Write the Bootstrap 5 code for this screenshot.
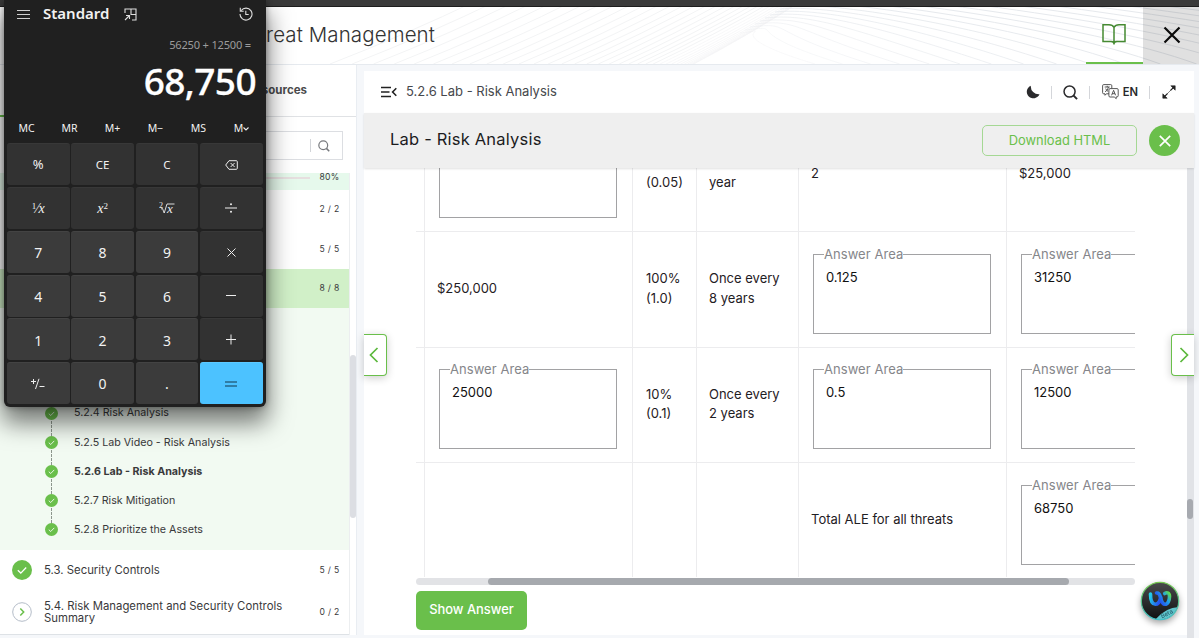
<!DOCTYPE html>
<html lang="en">
<head>
<meta charset="utf-8">
<meta name="viewport" content="width=device-width, initial-scale=1">
<title>5.2.6 Lab - Risk Analysis</title>
<link rel="stylesheet" href="https://cdn.jsdelivr.net/npm/bootstrap@5.3.0/dist/css/bootstrap.min.css">
<style>
:root { --leaf: #6abf4b; --ink: #39393b; }
body { font-family: Inter, "Liberation Sans", sans-serif; font-size: 13px; line-height: 19.5px; color: #1f2024; background: #f5f7fa; height: 638px; overflow: hidden; }
svg { display: block; flex: none; }
.chrome-strip { height: 7px; background: #3a3a3a; border-bottom: 1px solid #1d1d1d; }
.masthead { height: 58px; border-bottom: 1px solid #e6eaef; }
.masthead .waves { left: 0; top: 0; }
.masthead h1 { font-size: 20.5px; font-weight: 300; line-height: 56px; width: 435px; color: #333; letter-spacing: .1px; }
.book-tab { width: 57px; border-bottom: 2px solid var(--leaf); }
.exit-tab { width: 56px; background: rgba(0,0,0,.12); }
.side { width: 357px; border-right: 1px solid #e9edf2; }
.side-tabs { height: 52px; border-bottom: 1px solid #e0e2e5; font-size: 11.5px; font-weight: 700; color: #4a4a4c; padding-right: 49px; }
.tab-mark { left: 0; bottom: -1px; width: 120px; height: 2px; background: var(--leaf); }
.search-box { height: 29px; border: 1px solid #dcdee2; margin: 14px 13px 13px 16px; padding-right: 12px; }
.search-box .bar-line { height: 13px; border-left: 1px solid #d2d4d8; margin-right: 7px; }
.toc { width: 350px; border-right: 1px solid #eceef0; color: var(--ink); }
.tally { font-size: 8.6px; width: 39px; text-align: center; letter-spacing: .3px; flex: none; }
.row-head { height: 17px; background: #e6f9ec; }
.row-head .track { height: 2px; width: 200px; background: #e6dfdf; }
.sub-list { height: 242px; background: #f2faf2; padding-top: 90.5px; font-size: 10.68px; }
.sub-item { height: 29.2px; padding-left: 45px; gap: 16px; position: relative; }
.sub-item:not(:last-child)::after { content: ""; position: absolute; left: 51px; top: 22px; height: 15px; border-left: 1px dashed #8d968d; }
.topic { padding-left: 12px; font-size: 11.35px; line-height: 12.5px; }
.topic svg { margin-right: 12px; }
.side-scroll { width: 6px; }
.side-thumb { width: 6px; height: 163px; margin-top: 182px; background: #dcdee3; }
.stage { width: 830px; margin: 6px 5px 0 7px; }
.lesson-bar { height: 42px; padding: 0 17px; font-size: 13px; color: #46484c; }
.lesson-bar .sep { width: 1px; height: 13px; background: #d4d6da; }
.lab-bar { height: 55px; background: #efefef; padding: 0 14px 0 26px; box-shadow: 0 1px 2px rgba(0,0,0,.12); z-index: 2; }
.lab-bar h2 { font-size: 16.5px; letter-spacing: .2px; line-height: 52px; color: #1c1c1e; font-weight: 400; }
.btn-leaf-line { width: 155px; height: 31px; padding: 0; border: 1px solid #a5d894; border-radius: 5px; color: var(--leaf); font-size: 12.9px; line-height: 26px; }
.dot-close { width: 31px; height: 31px; background: var(--leaf); margin-left: 12px; }
.scroller { width: 719px; height: 409px; margin-left: 52px; }
.risk { table-layout: fixed; width: 927px; margin-top: -51px; border-collapse: separate; border-spacing: 0; }
.risk td { height: 115.33px; border-right: 1px solid #ececee; border-bottom: 1px solid #ececee; padding: 0 12px 1.5px; vertical-align: middle; }
.risk td.wide-tight { padding-left: 13px; }
.risk tr:last-child td { border-bottom: 0; padding-bottom: 2px; }
.answer { border: 1px solid #a2a2a4; height: 89px; width: 178px; margin: 1px 0 0 2px; padding: 0 12px; }
.answer legend { float: none; width: auto; margin: 0 0 0 -2px; padding: 0; font-size: 13px; line-height: 19px; color: #85868a; letter-spacing: .05px; }
.answer .reply { color: #111; margin-top: 4px; }
.h-track { width: 719px; height: 7px; margin: 1px 0 6px 52px; background: #e2e3e6; border-radius: 4px; }
.h-thumb { width: 581px; height: 7px; margin-left: 72px; background: #a6a9ae; border-radius: 4px; }
.btn-leaf { margin-left: 52px; width: 111px; height: 39px; background: var(--leaf); color: #fff; font-size: 12.9px; font-weight: 500; border: 0; border-radius: 5px; padding: 0 0 1px; }
.v-track { right: 0; top: 97px; width: 7px; height: 480px; background: #e1e3e7; }
.v-thumb { width: 6px; height: 20px; margin-top: 331px; background: #a7aab0; border-radius: 3px; }
.pager { width: 23px; height: 42px; top: 263px; border: 1px solid var(--leaf); background: #fff; box-shadow: 0 2px 8px rgba(0,0,0,.2); z-index: 3; }
.pager-prev { left: 0; border-left: 0; border-radius: 0 4px 4px 0; }
.pager-next { right: 0; border-right: 0; border-radius: 4px 0 0 4px; }
.helper { left: 776px; top: 510px; filter: drop-shadow(0 3px 3px rgba(0,0,0,.35)); z-index: 3; }
.calc { left: 4px; top: 0; width: 262px; height: 407px; background: #202020; border-radius: 0 0 6px 6px; color: #f2f2f2; font-family: "Noto Sans", "Open Sans", sans-serif; box-shadow: 0 14px 24px 2px rgba(0,0,0,.52), 0 0 6px rgba(0,0,0,.35); z-index: 10; }
.calc-title { height: 28px; padding: 0 13px 0 13px; }
.calc-title strong { font-size: 15px; font-weight: 600; margin: 0 15px 0 13px; }
.calc-expr { height: 32px; line-height: 34px; font-size: 11.1px; color: #9c9c9c; padding-right: 15px; letter-spacing: -.2px; }
.calc-value { height: 56px; line-height: 41px; font-size: 37px; font-weight: 500; padding-right: 10px; color: #fff; letter-spacing: -.6px; -webkit-text-stroke: .3px #fff; }
.calc-mem { height: 27px; line-height: 25px; font-size: 10.5px; padding: 0 1px; display: grid; grid-template-columns: repeat(6, 43px); text-align: center; }
.calc-keys { display: grid; grid-template-columns: repeat(4, 62.5px); grid-template-rows: repeat(6, 42px); gap: 1.85px; margin-left: 3px; }
.key { background: #323232; border-radius: 3px; font-size: 11.5px; display: flex; align-items: center; justify-content: center; border-top: 1px solid #383838; }
.key.num { background: #3b3b3b; border-top-color: #434343; font-size: 14px; padding-top: 1px; }
.key.math { font-family: "Liberation Serif", serif; font-style: italic; font-size: 14px; }
.key.math sup { font-size: 9px; font-style: normal; top: -.4em; }
.key.equals { background: #4cc2ff; border-top-color: #5cc8ff; }
</style>
</head>
<body>
<svg width="0" height="0" class="position-absolute">
  <symbol id="tick" viewBox="0 0 20 20"><circle cx="10" cy="10" r="10" fill="#6abf4b"/><path d="M5.8 10.3l3 2.8 5.4-5.6" fill="none" stroke="#fff" stroke-width="1.3"/></symbol>
  <symbol id="lens" viewBox="0 0 16 16"><circle cx="7" cy="7" r="5.9" fill="none" stroke="currentColor" stroke-width="1.6"/><path d="M11.2 11.2l3.800 3.800" stroke="currentColor" stroke-width="2"/></symbol>
</svg>
<div class="chrome-strip"></div>
<header class="masthead bg-white d-flex position-relative">
  <svg id="waves" class="waves position-absolute" width="1199" height="57" fill="none"></svg>
  <h1 class="m-0 text-end text-nowrap position-relative">Module 5: Threat Management</h1>
  <div class="ms-auto d-flex position-relative">
    <div class="book-tab d-flex justify-content-center">
      <svg width="26" height="24" viewBox="0 0 26 24" fill="none" stroke="#468a32" stroke-width="1.5" style="margin:16px 2px 0 0"><path d="M13 21.500V4.500C12 2.500 10 1.700 8 1.700H2v16.800h8c1.500 0 3 .8 3 2.300 0-1.500 1.500-2.300 3-2.300h8V1.700h-6c-2 0-4 .8-5 2.800"/></svg>
    </div>
    <div class="exit-tab d-flex align-items-center justify-content-center">
      <svg width="18" height="18" viewBox="0 0 18 18" stroke="#0b0b0b" stroke-width="2.200" style="margin:0 0 2px 1px"><path d="M1.500 1.500l15 15M16.500 1.500l-15 15"/></svg>
    </div>
  </div>
</header>

<div class="d-flex">
  <aside class="side bg-white">
    <div class="side-tabs d-flex align-items-center justify-content-end position-relative">Resources<span class="tab-mark position-absolute"></span></div>
    <div class="search-box d-flex align-items-center justify-content-end"><span class="bar-line"></span><svg width="12" height="12" style="color:#77797d"><use href="#lens"/></svg></div>
    <div class="d-flex">
      <div class="toc">
        <div class="row-head d-flex overflow-hidden"><span class="track ms-auto mt-1"></span><span class="tally" style="line-height:8px">80%</span></div>
        <div class="d-flex align-items-center justify-content-end" style="height:40px"><span class="tally">2 / 2</span></div>
        <div class="d-flex align-items-center justify-content-end" style="height:39px"><span class="tally">5 / 5</span></div>
        <div class="d-flex align-items-center justify-content-end" style="height:39px;background:#d1f0c8"><span class="tally">8 / 8</span></div>
        <div class="sub-list">
          <div class="sub-item d-flex align-items-center"><svg width="13" height="13"><use href="#tick"/></svg>5.2.4 Risk Analysis</div>
          <div class="sub-item d-flex align-items-center"><svg width="13" height="13"><use href="#tick"/></svg>5.2.5 Lab Video - Risk Analysis</div>
          <div class="sub-item d-flex align-items-center fw-bold"><svg width="13" height="13"><use href="#tick"/></svg>5.2.6 Lab - Risk Analysis</div>
          <div class="sub-item d-flex align-items-center"><svg width="13" height="13"><use href="#tick"/></svg>5.2.7 Risk Mitigation</div>
          <div class="sub-item d-flex align-items-center"><svg width="13" height="13"><use href="#tick"/></svg>5.2.8 Prioritize the Assets</div>
        </div>
        <div class="topic d-flex align-items-center" style="height:40px"><svg width="20" height="20"><use href="#tick"/></svg><span class="flex-grow-1">5.3. Security Controls</span><span class="tally">5 / 5</span></div>
        <div class="topic d-flex align-items-center border-bottom" style="height:45px">
          <svg width="20" height="20" viewBox="0 0 20 20" fill="none"><circle cx="10" cy="10" r="9.300" stroke="#b4bcc8"/><path d="M8.300 6.500l3.400 3.500-3.400 3.500" stroke="#6abf4b" stroke-width="1.500"/></svg>
          <span class="flex-grow-1">5.4. Risk Management and Security Controls<br>Summary</span><span class="tally">0 / 2</span></div>
      </div>
      <div class="side-scroll"><div class="side-thumb rounded-pill"></div></div>
    </div>
  </aside>

  <main class="stage bg-white position-relative">
    <div class="lesson-bar d-flex align-items-center">
      <svg width="16" height="12" viewBox="0 0 16 12" fill="none" stroke="#222" stroke-width="1.600" style="margin-right:9px"><path d="M0 1.500h10M0 6h8.500M0 10.500h10M15.300 2.300L11.600 6l3.700 3.700"/></svg>
      <span>5.2.6 Lab - Risk Analysis</span>
      <svg class="ms-auto" width="14" height="14" viewBox="0 0 14 14"><path d="M4.800.7A6.600 6.600 0 1 0 13.500 9.300 8 8 0 0 1 4.800.7z" fill="#2b2b2d"/></svg>
      <span class="sep" style="margin:0 11px"></span>
      <svg width="15" height="15" style="color:#2b2b2d"><use href="#lens"/></svg>
      <span class="sep" style="margin:0 12px 0 11px"></span>
      <svg width="17" height="16" viewBox="0 0 17 16" fill="none" stroke="#444" stroke-width=".9"><path d="M7 9.800H4.300L3 11.300V9.800H1.700Q.6 9.800.6 8.700V1.700Q.6.600 1.700.600h7q1.100 0 1.100 1.100v2.600"/><path d="M8 4.600h7q1.200 0 1.200 1.100v6q0 1.200-1.200 1.200h-.8v1.800L12.300 13H8q-1.100 0-1.100-1.100v-6Q6.900 4.600 8 4.600z"/><path d="M2.700 3h5M5.200 1.800V3M3 7.800Q6 6.600 6.500 3M3.700 4.600q.8 2 2.500 2.900M9.600 11.300l2-5 2 5M10.300 9.700h2.600"/></svg>
      <span class="fw-semibold" style="margin-left:4px;font-size:11.200px;color:#28282a;padding-top:1px">EN</span>
      <span class="sep" style="margin:0 12px 0 11px"></span>
      <svg width="14" height="14" viewBox="0 0 14 14" fill="#222" stroke="#222" style="margin-right:1px"><path d="M8.300 5.700L12 2M2 12l3.700-3.700" stroke-width="1.200"/><path d="M6.300 7.700l1.400-1.400" stroke-width=".8"/><path d="M8.800.8h4.400v4.400zM.8 8.800v4.400h4.400z" stroke-width=".6"/></svg>
    </div>
    <div class="lab-bar d-flex align-items-center position-relative">
      <h2 class="m-0 align-self-start">Lab - Risk Analysis</h2>
      <button class="btn btn-leaf-line ms-auto">Download HTML</button>
      <span class="dot-close rounded-circle d-flex align-items-center justify-content-center"><svg width="12" height="12" viewBox="0 0 12 12" stroke="#fff" stroke-width="1.700"><path d="M.8.800l10.400 10.400M11.200.800L.800 11.200"/></svg></span>
    </div>
    <div class="scroller overflow-hidden">
      <table class="risk">
        <colgroup><col style="width:9px"><col style="width:208px"><col style="width:64px"><col style="width:102px"><col style="width:208px"><col style="width:336px"></colgroup>
        <tr><td class="p-0"></td><td><fieldset class="answer"></fieldset></td><td class="wide-tight"><div style="padding-top:18px">(0.05)</div></td><td><div style="padding-top:18px">year</div></td><td>2</td><td>$25,000</td></tr>
        <tr><td class="p-0"></td><td>$250,000</td><td class="wide-tight">100%<br>(1.0)</td><td>Once every<br>8 years</td><td><fieldset class="answer"><legend>Answer Area</legend><div class="reply">0.125</div></fieldset></td><td><fieldset class="answer"><legend>Answer Area</legend><div class="reply">31250</div></fieldset></td></tr>
        <tr><td class="p-0"></td><td><fieldset class="answer"><legend>Answer Area</legend><div class="reply">25000</div></fieldset></td><td class="wide-tight">10%<br>(0.1)</td><td>Once every<br>2 years</td><td><fieldset class="answer"><legend>Answer Area</legend><div class="reply">0.5</div></fieldset></td><td><fieldset class="answer"><legend>Answer Area</legend><div class="reply">12500</div></fieldset></td></tr>
        <tr><td class="p-0"></td><td></td><td></td><td></td><td>Total ALE for all threats</td><td><fieldset class="answer"><legend>Answer Area</legend><div class="reply">68750</div></fieldset></td></tr>
      </table>
    </div>
    <div class="h-track"><div class="h-thumb"></div></div>
    <button class="btn btn-leaf">Show Answer</button>
    <div class="v-track position-absolute"><div class="v-thumb"></div></div>
    <div class="pager pager-prev position-absolute d-flex align-items-center justify-content-center"><svg width="10" height="16" viewBox="0 0 10 16" fill="none" stroke="#5cb83c" stroke-width="1.700" style="margin-right:2px"><path d="M8.500 1L1.500 8l7 7"/></svg></div>
    <div class="pager pager-next position-absolute d-flex align-items-center justify-content-center"><svg width="10" height="16" viewBox="0 0 10 16" fill="none" stroke="#5cb83c" stroke-width="1.700" style="margin-left:2px"><path d="M1.500 1l7 7-7 7"/></svg></div>
    <div class="helper position-absolute">
      <svg width="40" height="40" viewBox="0 0 40 40">
        <defs>
          <linearGradient id="disc" x2="0" y2="1"><stop stop-color="#4a4a4c"/><stop offset="1" stop-color="#0f1011"/></linearGradient>
          <linearGradient id="rim" x2="0" y2="1"><stop stop-color="#76c84e"/><stop offset="1" stop-color="#3fc0c8"/></linearGradient>
          <linearGradient id="ringA" x2="1" y2=".3"><stop stop-color="#22d0e8"/><stop offset="1" stop-color="#2450f0"/></linearGradient>
          <linearGradient id="ringB" x1="1" y1="0" x2="0" y2=".6"><stop stop-color="#5fe04a"/><stop offset=".4" stop-color="#1fa0e8"/><stop offset="1" stop-color="#2440f0"/></linearGradient>
          <clipPath id="round"><circle cx="20" cy="20" r="18.500"/></clipPath>
        </defs>
        <circle cx="20" cy="20" r="18.700" fill="url(#disc)" stroke="url(#rim)" stroke-width="1.200"/>
        <g clip-path="url(#round)"><path d="M14 40Q25 26 40 26V40z" fill="#5fc5cd"/><text x="22" y="37.500" font-size="6" fill="#235a66" transform="rotate(-27 22 37.5)">Beta</text></g>
        <g fill="none" stroke-width="3.600" stroke-linecap="round"><path d="M10.500 13c0 6 1.500 10.300 5 10.300s4.500-3.300 5.300-6.800" stroke="url(#ringA)"/><path d="M16.500 12c2.500-.5 3.300 1.500 4 4.500s1.700 6.800 4.500 6.800 4.500-4 4.500-7.800-2.500-4.500-4.800-3" stroke="url(#ringB)"/></g>
      </svg>
    </div>
  </main>
</div>

<section class="calc position-absolute">
  <div class="calc-title d-flex align-items-center">
    <svg width="13" height="9" viewBox="0 0 13 9" stroke="#cfcfcf" stroke-width="1"><path d="M0 .5h13M0 4.500h13M0 8.500h13"/></svg>
    <strong>Standard</strong>
    <svg width="13" height="13" viewBox="0 0 13 13" fill="none" stroke="#dedede" stroke-width="1.100"><path d="M1 5V1h11v11H8M7 1v5.500h5M1 12l4.500-4.500M2 7.500h3.500V11"/></svg>
    <svg class="ms-auto" width="14" height="14" viewBox="0 0 14 14" fill="none" stroke="#dedede" stroke-width="1.100"><path d="M2.200 3.500A6 6 0 1 1 1 7M1.300.800v3.400h3.400M6.800 3.800v3.700h2.900"/></svg>
  </div>
  <div class="calc-expr text-end">56250 + 12500 =</div>
  <div class="calc-value text-end">68,750</div>
  <div class="calc-mem"><span>MC</span><span>MR</span><span>M+</span><span>M−</span><span>MS</span><span>M<svg class="d-inline-block align-middle" width="6" height="4" viewBox="0 0 6 4" fill="none" stroke="#eee" stroke-width="1.100"><path d="M.5.500L3 3 5.500.500"/></svg></span></div>
  <div class="calc-keys">
    <div class="key" style="font-size:13px">%</div><div class="key">CE</div><div class="key">C</div>
    <div class="key"><svg width="13" height="10" viewBox="0 0 13 10" fill="none" stroke="#eee"><path d="M4 .700h7.300q1 0 1 1v6.600q0 1-1 1H4L.700 5zM5.600 3l4 4M9.600 3l-4 4"/></svg></div>
    <div class="key math"><span><sup>1</sup>⁄<i>x</i></span></div><div class="key math"><span>x<sup>2</sup></span></div>
    <div class="key math"><svg width="16" height="14" viewBox="0 0 16 14" fill="none" stroke="#eee" stroke-width=".9"><path d="M2 8l1.500-.5 1.700 4.500L8 3h7.500"/><text x="0" y="6.500" font-size="8" fill="#eee" stroke="none" font-style="normal">2</text><text x="8" y="12" font-size="13" fill="#eee" stroke="none">x</text></svg></div>
    <div class="key"><svg width="12" height="10" viewBox="0 0 12 10" fill="#eee"><path d="M0 4.500h12v1H0z"/><circle cx="6" cy="1.200" r="1"/><circle cx="6" cy="8.800" r="1"/></svg></div>
    <div class="key num">7</div><div class="key num">8</div><div class="key num">9</div>
    <div class="key"><svg width="9" height="9" viewBox="0 0 9 9" stroke="#eee"><path d="M.5.500l8 8M8.500.500l-8 8"/></svg></div>
    <div class="key num">4</div><div class="key num">5</div><div class="key num">6</div>
    <div class="key"><svg width="10" height="2" viewBox="0 0 10 2" stroke="#eee"><path d="M0 .500h10"/></svg></div>
    <div class="key num">1</div><div class="key num">2</div><div class="key num">3</div>
    <div class="key"><svg width="10" height="11" viewBox="0 0 10 11" stroke="#eee"><path d="M0 5.500h10M5 .500v10"/></svg></div>
    <div class="key num"><svg width="14" height="12" viewBox="0 0 14 12" stroke="#eee" fill="none"><path d="M0 3.500h5M2.500 1v5M8 .800L4.500 11M8.500 8.500h5"/></svg></div><div class="key num">0</div><div class="key num">.</div>
    <div class="key equals"><svg width="12" height="6" viewBox="0 0 12 6" stroke="#12384c"><path d="M0 1h12M0 5h12"/></svg></div>
  </div>
</section>

<script src="https://cdn.jsdelivr.net/npm/bootstrap@5.3.0/dist/js/bootstrap.bundle.min.js"></script>
<script>
// Header contour lines: each rises from the lower left, bends over the crest and falls away to the right.
const lines = [];
for (let i = 0; i < 34; i++) {
  const x = 330 + 364 * (1 - Math.pow(1 - i / 34, 2.1));
  const run = 150 - i * 1.2;
  lines.push(`<path d="M${x} 57Q${x + run * .5} 28 ${x + run} -8" stroke="#f3f4f5" opacity="${i > 22 ? .6 : 1}"/>`);
}
for (let i = 0; i < 26; i++) {
  const x = 815 + i * 27 + i * i * .4;
  const crest = 740 + i * 5;
  lines.push(`<path d="M${crest} ${26 - i * 3}C${crest + 45} ${21 - i * 3} ${x - 110} ${24 - i * .6} ${x} 57" stroke="#e6e9ed" opacity="${Math.min(1, .25 + i * .07)}"/>`);
}
document.getElementById('waves').innerHTML = lines.join('');
</script>
</body>
</html>
